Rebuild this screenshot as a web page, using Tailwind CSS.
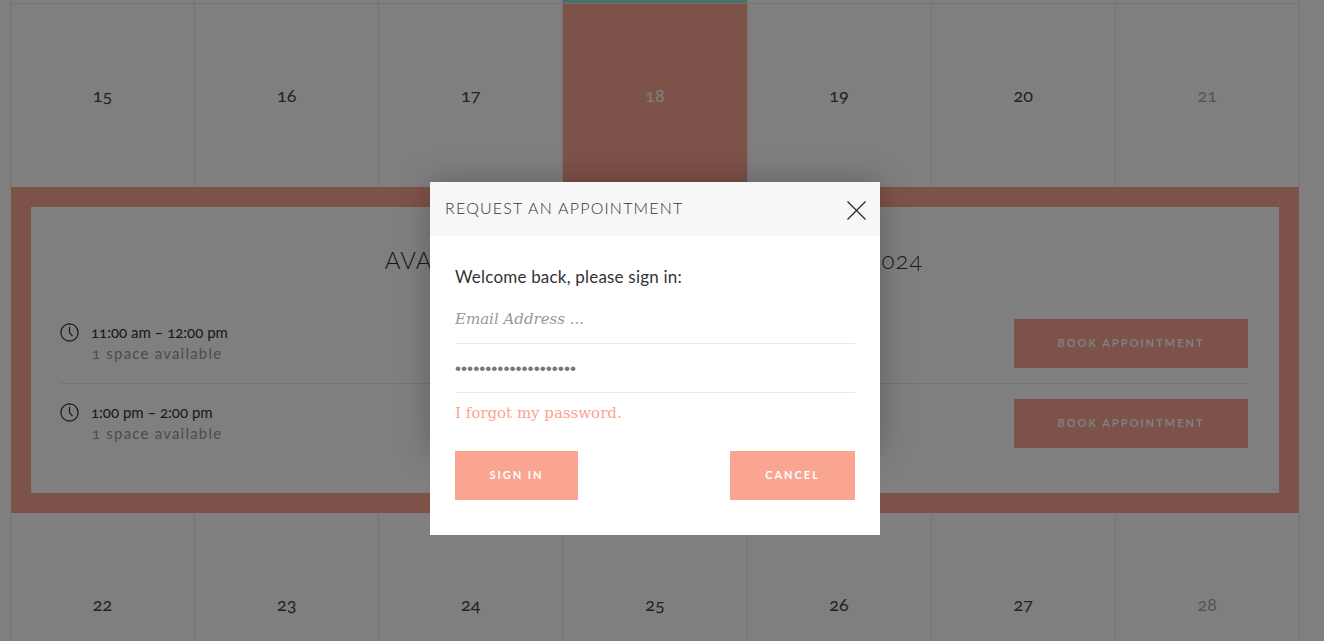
<!DOCTYPE html>
<html lang="en">
<head>
    <meta charset="UTF-8">
    <meta name="viewport" content="width=device-width, initial-scale=1.0">
    <title>Request an appointment</title>
    <script src="https://cdn.jsdelivr.net/npm/@tailwindcss/browser@4"></script>
</head>
<body class="relative h-[641px] overflow-hidden bg-white font-['Lato','Liberation_Sans',sans-serif] text-[#333] oldstyle-nums">
    <!-- calendar -->
    <div class="ml-[10px] -mt-[181px] w-[1290px]">
        <div class="grid grid-cols-[repeat(6,184.14px)_185px] border-b border-[#e8e8e8]">
            <div class="h-[184px] border-l border-[#e8e8e8]"></div>
            <div class="h-[184px] border-l border-[#e8e8e8]"></div>
            <div class="h-[184px] border-l border-[#e8e8e8]"></div>
            <div class="h-[184px] border-l border-[#e8e8e8] bg-[#96ded6]"></div>
            <div class="h-[184px] border-l border-[#e8e8e8]"></div>
            <div class="h-[184px] border-l border-[#e8e8e8]"></div>
            <div class="h-[184px] border-x border-[#e8e8e8]"></div>
        </div>
        <div class="grid grid-cols-[repeat(6,184.14px)_185px] text-[18px] text-[#444]">
            <div class="flex h-[183px] items-center justify-center border-l border-[#e8e8e8]">15</div>
            <div class="flex h-[183px] items-center justify-center border-l border-[#e8e8e8]">16</div>
            <div class="flex h-[183px] items-center justify-center border-l border-[#e8e8e8]">17</div>
            <div class="flex h-[183px] items-center justify-center border-l border-[#e8e8e8] bg-[#faa492] text-white">18</div>
            <div class="flex h-[183px] items-center justify-center border-l border-[#e8e8e8]">19</div>
            <div class="flex h-[183px] items-center justify-center border-l border-[#e8e8e8]">20</div>
            <div class="flex h-[183px] items-center justify-center border-x border-[#e8e8e8] text-[#aaa]">21</div>
        </div>

        <!-- available times panel -->
        <div class="ml-px h-[326px] w-[1288px] border-[20px] border-[#faa492] bg-white pr-[31px] pl-[29px]">
            <h2 class="flex h-[96px] items-center justify-center pt-[9px] text-[24px] font-light tracking-[0.9px] uppercase">Available appointments on July 18, 2024</h2>
            <div class="flex items-center justify-between border-b border-[#e8e8e8] pt-[16px] pb-[15px]">
                <div class="-mt-[2px] flex gap-[12px]">
                    <svg class="mt-[1px] h-[19px] w-[19px]" viewBox="0 0 19 19" fill="none" stroke="#333" stroke-width="1.2"><circle cx="9.5" cy="9.5" r="8.6"/><path d="M9.5 3.8v5.7l3 3.6"/></svg>
                    <div>
                        <div class="text-[15px] leading-[20px]">11:00 am – 12:00 pm</div>
                        <div class="mt-px ml-px text-[15px] leading-[20px] tracking-[1.2px] text-[#999]">1 space available</div>
                    </div>
                </div>
                <button class="h-[49px] w-[234px] bg-[#faa492] text-[11px] font-bold tracking-[2px] text-white uppercase">Book appointment</button>
            </div>
            <div class="flex items-center justify-between pt-[15px]">
                <div class="-mt-[2px] flex gap-[12px]">
                    <svg class="mt-[1px] h-[19px] w-[19px]" viewBox="0 0 19 19" fill="none" stroke="#333" stroke-width="1.2"><circle cx="9.5" cy="9.5" r="8.6"/><path d="M9.5 3.8v5.7l3 3.6"/></svg>
                    <div>
                        <div class="text-[15px] leading-[20px]">1:00 pm – 2:00 pm</div>
                        <div class="mt-px ml-px text-[15px] leading-[20px] tracking-[1.2px] text-[#999]">1 space available</div>
                    </div>
                </div>
                <button class="h-[49px] w-[234px] bg-[#faa492] text-[11px] font-bold tracking-[2px] text-white uppercase">Book appointment</button>
            </div>
        </div>

        <div class="grid grid-cols-[repeat(6,184.14px)_185px] text-[18px] text-[#444]">
            <div class="flex h-[184px] items-center justify-center border-l border-[#e8e8e8] pb-[2px]">22</div>
            <div class="flex h-[184px] items-center justify-center border-l border-[#e8e8e8] pb-[2px]">23</div>
            <div class="flex h-[184px] items-center justify-center border-l border-[#e8e8e8] pb-[2px]">24</div>
            <div class="flex h-[184px] items-center justify-center border-l border-[#e8e8e8] pb-[2px]">25</div>
            <div class="flex h-[184px] items-center justify-center border-l border-[#e8e8e8] pb-[2px]">26</div>
            <div class="flex h-[184px] items-center justify-center border-l border-[#e8e8e8] pb-[2px]">27</div>
            <div class="flex h-[184px] items-center justify-center border-x border-[#e8e8e8] pb-[2px] text-[#aaa]">28</div>
        </div>
    </div>

    <!-- modal -->
    <div class="absolute inset-0 bg-black/50"></div>
    <div class="absolute top-[182px] left-[430px] h-[270px] w-[450px] shadow-[0_0_30px_rgba(0,0,0,0.25)]"></div>
    <div class="absolute top-[182px] left-[430px] h-[353px] w-[450px] bg-white">
        <div class="flex h-[54px] items-center justify-between bg-[#f7f7f7] pr-[14px] pl-[15px]">
            <h3 class="pb-[2px] text-[16px] font-light tracking-[1.2px] text-[#333] uppercase">Request an appointment</h3>
            <svg class="mt-[2px] h-[19px] w-[19px]" viewBox="0 0 19 19" fill="none" stroke="#222" stroke-width="1.1"><path d="M0.5 0.5l18 18M18.5 0.5l-18 18"/></svg>
        </div>
        <div class="px-[25px] pt-[30px]">
            <p class="text-[17px] leading-[22px] tracking-[0.2px] text-[#333]">Welcome back, please sign in:</p>
            <input type="email" placeholder="Email Address ..." class="mt-[7px] block h-[49px] w-full border-b border-[#e8e8e8] pb-[1px] font-['DejaVu_Serif',serif] text-[15px] italic outline-none placeholder:text-[#999]">
            <input type="password" value="passwordpassword1234" class="block h-[49px] w-full border-b border-[#e8e8e8] font-['Liberation_Sans',sans-serif] text-[17.3px] text-[#777] outline-none">
            <a href="#" class="mt-[9px] block font-['DejaVu_Serif',serif] text-[15px] leading-[22px] text-[#faa492]">I forgot my password.</a>
            <div class="mt-[27px] flex justify-between">
                <button class="h-[49px] w-[123px] bg-[#faa492] text-[11px] font-bold tracking-[2px] text-white uppercase">Sign in</button>
                <button class="h-[49px] w-[125px] bg-[#faa492] text-[11px] font-bold tracking-[2px] text-white uppercase">Cancel</button>
            </div>
        </div>
    </div>
</body>
</html>
